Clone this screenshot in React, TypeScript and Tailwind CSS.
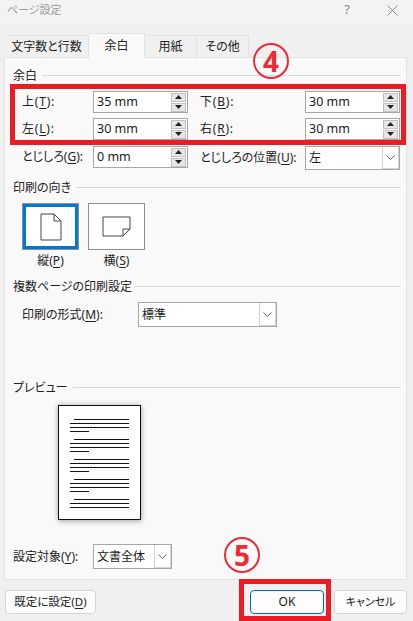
import React from "react";

const font = { fontFamily: '"Noto Sans", "Noto Sans CJK JP", sans-serif' };

function U({ c }: { c: string }) {
  return <span className="underline underline-offset-2 decoration-1">{c}</span>;
}

function Heading({ text, className }: { text: string; className: string }) {
  return (
    <div className={`flex items-center h-4 pl-[8px] pr-[5px] ${className}`}>
      <span className="text-[12px] leading-4 text-[#222222] whitespace-nowrap mt-[2px]">{text}</span>
      <div className="flex-1 h-px bg-[#d9d9d9] ml-[5px]" />
    </div>
  );
}

function Spinner() {
  return (
    <div className="flex flex-col w-[15px] h-[19px] gap-px shrink-0">
      {[0, 1].map((i) => (
        <div key={i} className="flex-1 bg-[#e6e6e6] border border-[#c2c2c2] flex items-center justify-center">
          <svg width="7" height="4" viewBox="0 0 7 4">
            <path d={i === 0 ? "M3.5 0L7 4H0Z" : "M0 0H7L3.5 4Z"} fill="#222222" />
          </svg>
        </div>
      ))}
    </div>
  );
}

function NumberInput({ value }: { value: string }) {
  return (
    <div className="w-[95px] h-[22px] bg-white border border-[#a6a6a6] flex items-center justify-between pl-[3px] pr-px">
      <span className="text-[12.5px] text-[#1a1a1a]">{value}</span>
      <Spinner />
    </div>
  );
}

function Chevron() {
  return (
    <svg width="9" height="5" viewBox="0 0 9 5" fill="none">
      <path d="M0.5 0.5L4.5 4.5L8.5 0.5" stroke="#666666" strokeWidth="1" />
    </svg>
  );
}

function Select({ value, className, arrow }: { value: string; className: string; arrow: string }) {
  return (
    <div className={`bg-white border border-[#a6a6a6] flex items-center justify-between pl-[3px] ${className}`}>
      <span className="text-[12px] text-[#1a1a1a]">{value}</span>
      <div className={`self-stretch bg-white border-l border-b border-r border-l-[#d4d4d4] border-b-[#d4d4d4] border-r-[#d4d4d4] flex items-center justify-center ${arrow}`}>
        <Chevron />
      </div>
    </div>
  );
}

function Field({ label, children, labelW, first, wide }: { label: React.ReactNode; children: React.ReactNode; labelW: string; first?: boolean; wide?: boolean }) {
  return (
    <div className={`flex items-center ${first ? "" : "ml-[12px]"}`}>
      <div className={`text-[12px] text-[#222222] whitespace-nowrap ${wide ? "tracking-[0.8px]" : ""} ${labelW}`}>{label}</div>
      {children}
    </div>
  );
}

function Tab({ text, active, w }: { text: string; active?: boolean; w: string }) {
  return (
    <div
      className={`${w} flex items-center justify-center text-[12px] text-[#222222] border-t border-r border-[#e3e3e3] ${
        active ? "h-[25px] bg-[#f9f9f9] -mb-px relative z-10" : "h-[22px] bg-[#f0f0f0]"
      }`}
    >
      {text}
    </div>
  );
}

function Orientation({ selected, label, children }: { selected?: boolean; label: React.ReactNode; children: React.ReactNode }) {
  return (
    <div className="flex flex-col items-center w-[57px]">
      <div className={`w-[57px] h-[47px] bg-white border border-[#8f8f8f] flex items-center justify-center ${selected ? "outline-[3px] outline-[#0078d4] -outline-offset-[4px]" : ""}`}>
        {children}
      </div>
      <div className="mt-[3px] h-4 text-[12px] leading-4 text-[#222222]">{label}</div>
    </div>
  );
}

function PageLines() {
  const groups = [0, 20, 40, 60, 80];
  return (
    <svg width="81" height="113" viewBox="0 0 81 113" className="block">
      {groups.map((y, i) => (
        <g key={y} stroke="#111111" strokeWidth="1">
          <path d={`M15 ${y + 13.5}H70`} />
          <path d={`M11 ${y + 17.5}H70`} />
          <path d={`M11 ${y + 21.5}H70`} />
          {i < 4 && <path d={`M11 ${y + 25.5}H30`} />}
        </g>
      ))}
    </svg>
  );
}

function Badge({ n, className }: { n: string; className: string }) {
  return (
    <div className={`absolute w-[36px] h-[36px] rounded-full border-2 border-[#ee2a35] bg-transparent flex items-center justify-center text-[#ee2a35] text-[28px] font-bold leading-none ${className}`}>
      {n}
    </div>
  );
}

export default function App() {
  return (
    <div className="relative w-[413px] h-[621px] bg-[#f0f0f0] overflow-hidden [font-feature-settings:'palt']" style={font}>
      <div className="h-[25px] bg-[#f3f3f3] flex items-center pl-[7px] pr-[15px]">
        <span className="text-[11px] text-[#9c9c9c] -mt-[5px]">ページ設定</span>
        <span className="ml-auto mr-[37px] text-[13px] text-[#8a8a8a] -mt-[5px]">?</span>
        <svg width="11" height="11" viewBox="0 0 11 11" className="-mt-[5px]">
          <path d="M0.5 0.5L10.5 10.5M10.5 0.5L0.5 10.5" stroke="#8a8a8a" strokeWidth="1" fill="none" />
        </svg>
      </div>

      <div className="flex items-end h-[32px] pl-[5px]">
        <Tab text="文字数と行数" w="w-[84px]" />
        <Tab text="余白" active w="w-[56px]" />
        <Tab text="用紙" w="w-[52px]" />
        <Tab text="その他" w="w-[52px]" />
      </div>

      <div className="mx-[4px] w-[403px] h-[523px] bg-[#f9f9f9] border border-[#e3e3e3] flex flex-col">
        <Heading text="余白" className="mt-[9px]" />
        <div className="flex mt-[8px] pl-[17px]">
          <Field first wide labelW="w-[71px]" label={<>上(<U c="T" />):</>}><NumberInput value="35 mm" /></Field>
          <Field wide labelW="w-[105px]" label={<>下(<U c="B" />):</>}><NumberInput value="30 mm" /></Field>
        </div>
        <div className="flex mt-[5px] pl-[17px]">
          <Field first wide labelW="w-[71px]" label={<>左(<U c="L" />):</>}><NumberInput value="30 mm" /></Field>
          <Field wide labelW="w-[105px]" label={<>右(<U c="R" />):</>}><NumberInput value="30 mm" /></Field>
        </div>
        <div className="flex mt-[6px] pl-[17px] h-[24px] items-start">
          <Field first labelW="w-[71px]" label={<>とじしろ(<U c="G" />):</>}><NumberInput value="0 mm" /></Field>
          <Field labelW="w-[105px]" label={<>とじしろの位置(<U c="U" />):</>}>
            <Select value="左" className="w-[95px] h-[24px]" arrow="w-[17px]" />
          </Field>
        </div>

        <Heading text="印刷の向き" className="mt-[9px]" />
        <div className="flex gap-[9px] mt-[8px] pl-[17px]">
          <Orientation selected label={<>縦(<U c="P" />)</>}>
            <svg width="22" height="28" viewBox="0 0 22 28" fill="none">
              <path d="M1 1H14L21 8V27H1Z M14 1V8H21" stroke="#444444" strokeWidth="1" />
            </svg>
          </Orientation>
          <Orientation label={<>横(<U c="S" />)</>}>
            <svg width="29" height="21" viewBox="0 0 29 21" fill="none">
              <path d="M1 1H28V13L21 20H1Z M28 13H21V20" stroke="#444444" strokeWidth="1" />
            </svg>
          </Orientation>
        </div>

        <Heading text="複数ページの印刷設定" className="mt-[9px]" />
        <div className="flex items-center mt-[8px] pl-[17px]">
          <div className="w-[116px] text-[12px] text-[#222222] whitespace-nowrap">印刷の形式(<U c="M" />):</div>
          <Select value="標準" className="w-[139px] h-[25px]" arrow="w-[17px]" />
        </div>

        <Heading text="プレビュー" className="mt-[52px]" />
        <div className="mt-[10px] ml-[53px] w-[83px] h-[115px] bg-white border border-[#111111] shadow-[-1px_-1px_5px_rgba(0,0,0,0.18),1px_2px_5px_rgba(0,0,0,0.22)]">
          <PageLines />
        </div>

        <div className="flex items-center mt-[24px] pl-[8px]">
          <div className="w-[80px] text-[12px] text-[#222222] whitespace-nowrap">設定対象(<U c="Y" />):</div>
          <Select value="文書全体" className="w-[79px] h-[25px]" arrow="w-[17px]" />
        </div>
      </div>

      <div className="flex items-start mt-[10px] pl-[5px]">
        <button className="w-[91px] h-[24px] bg-[#fdfdfd] border border-[#d4d4d4] rounded-[4px] text-[11.5px] text-[#222222] flex items-center justify-center">
          既定に設定(<U c="D" />)
        </button>
        <button className="ml-[154px] w-[74px] h-[24px] bg-[#fdfdfd] border border-[#0067c0] rounded-[4px] text-[12px] text-[#222222] flex items-center justify-center">
          OK
        </button>
        <button className="ml-[10px] w-[73px] h-[24px] bg-[#fdfdfd] border border-[#d4d4d4] rounded-[4px] text-[11px] text-[#222222] flex items-center justify-center">
          キャンセル
        </button>
      </div>

      <div className="absolute left-[10px] top-[84px] w-[396px] h-[61px] border-[5px] border-[#ed1c24]" />
      <div className="absolute left-[239px] top-[579px] w-[92px] h-[42px] border-[5px] border-[#ed1c24]" />
      <Badge n="4" className="left-[253px] top-[43px]" />
      <Badge n="5" className="left-[224px] top-[537px]" />
    </div>
  );
}
